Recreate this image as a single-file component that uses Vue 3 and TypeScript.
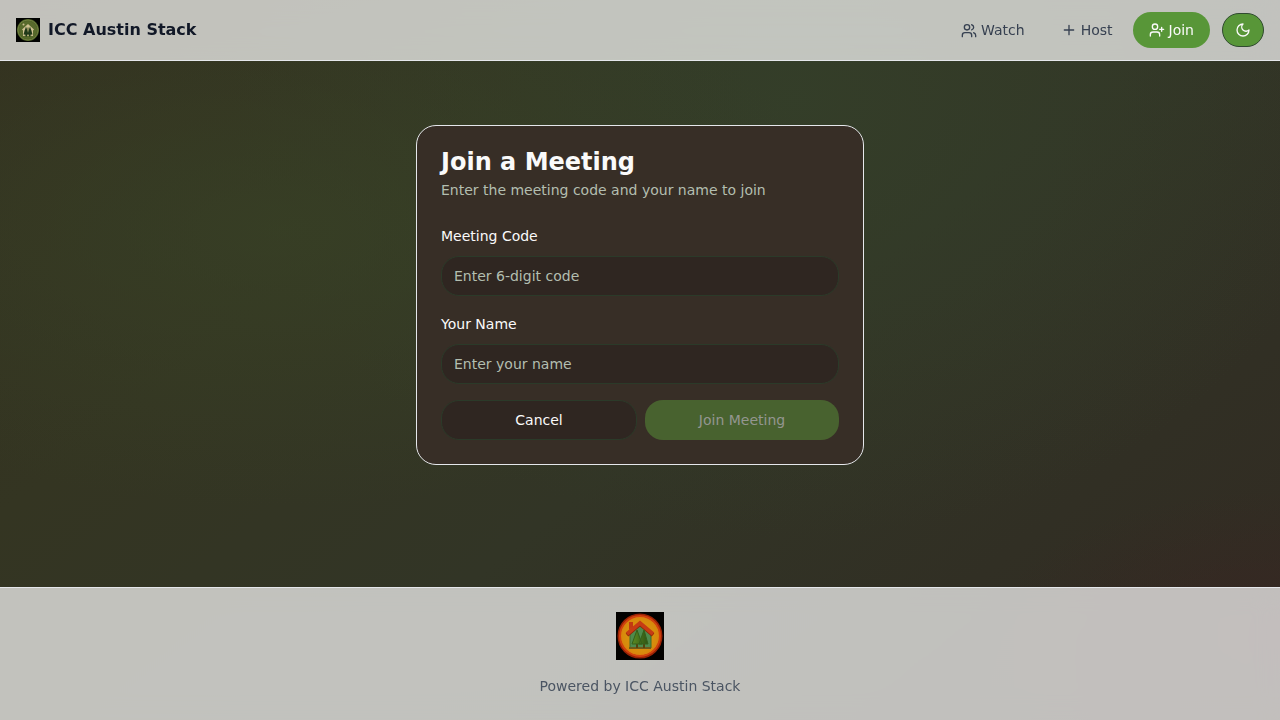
<script setup lang="ts">
import { computed, ref } from 'vue'

const meetingCode = ref('')
const userName = ref('')
const canJoin = computed(() => meetingCode.value.length === 6 && userName.value.trim() !== '')

function reset(): void {
  meetingCode.value = ''
  userName.value = ''
}
</script>

<template>
  <div class="page">
    <header class="topbar">
      <a class="brand" href="#">
        <svg class="brand-logo" viewBox="0 0 48 48" aria-hidden="true">
          <rect width="48" height="48" fill="#020302" />
          <circle cx="24" cy="24" r="22" fill="#4f6329" />
          <circle cx="24" cy="24" r="20" fill="none" stroke="#707f3e" stroke-width="2" />
          <circle cx="24" cy="24" r="18" fill="#586a2c" />
          <circle cx="15" cy="13" r="2" fill="#cdbf90" />
          <path d="M12 23 24 12l12 11-2 2v11H14V25z" fill="#cfc192" />
          <path d="M17 25l7-7 7 7v10H17z" fill="#8c8c58" />
          <path d="M20 17l5 16h-3v4h-3v-4h-4zM28 17l5 16h-4v4h-3v-4h-3z" fill="#1f3819" />
        </svg>
        <span>ICC Austin Stack</span>
      </a>
      <nav class="nav">
        <a class="nav-link" href="#watch">
          <svg class="icon" viewBox="0 0 24 24" aria-hidden="true">
            <path d="M16 22v-2a4 4 0 0 0-4-4H6a4 4 0 0 0-4 4v2" />
            <circle cx="9" cy="8" r="4" />
            <path d="M22 22v-2a4 4 0 0 0-3-3.870M16 4.130a4 4 0 0 1 0 7.750" />
          </svg>
          Watch
        </a>
        <a class="nav-link" href="#host">
          <svg class="icon" viewBox="0 0 24 24" aria-hidden="true">
            <path d="M5 12h14M12 5v14" />
          </svg>
          Host
        </a>
        <a class="nav-link active" href="#join">
          <svg class="icon" viewBox="0 0 24 24" aria-hidden="true">
            <path d="M16 21v-2a4 4 0 0 0-4-4H6a4 4 0 0 0-4 4v2" />
            <circle cx="9" cy="7" r="4" />
            <path d="M19 8v6M22 11h-6" />
          </svg>
          Join
        </a>
        <button class="theme" type="button" aria-label="Toggle theme">
          <svg class="icon" viewBox="0 0 24 24" aria-hidden="true">
            <path d="M12 3a6 6 0 0 0 9 9 9 9 0 1 1-9-9Z" />
          </svg>
        </button>
      </nav>
    </header>

    <main class="main">
      <form class="card" @submit.prevent>
        <h1>Join a Meeting</h1>
        <p class="subtitle">Enter the meeting code and your name to join</p>
        <div class="field">
          <label for="code">Meeting Code</label>
          <input id="code" v-model="meetingCode" type="text" maxlength="6" placeholder="Enter 6-digit code" />
        </div>
        <div class="field">
          <label for="name">Your Name</label>
          <input id="name" v-model="userName" type="text" placeholder="Enter your name" />
        </div>
        <div class="actions">
          <button class="cancel" type="button" @click="reset">Cancel</button>
          <button class="submit" type="submit" :disabled="!canJoin">Join Meeting</button>
        </div>
      </form>
    </main>

    <footer class="footer">
      <svg class="footer-logo" viewBox="0 0 48 48" aria-hidden="true">
        <defs>
          <radialGradient id="disc">
            <stop offset="0" stop-color="#dc9a12" />
            <stop offset="0.800" stop-color="#d78b0c" />
            <stop offset="1" stop-color="#dd7a10" />
          </radialGradient>
          <linearGradient id="tree" x1="0" x2="1">
            <stop offset="0" stop-color="#5c8a22" />
            <stop offset="1" stop-color="#2e5414" />
          </linearGradient>
        </defs>
        <rect width="48" height="48" fill="#020100" />
        <circle cx="24" cy="24" r="21" fill="url(#disc)" stroke="#9a2205" stroke-width="3" />
        <circle cx="24" cy="24" r="20" fill="none" stroke="#d2420d" stroke-width="2" />
        <path d="M14 21 24 12l11 9v15H14z" fill="#4f8a4c" stroke="#3f6a2c" stroke-width="1" />
        <path d="M13 36h22" stroke="#6f5a1a" stroke-width="2" />
        <path d="M13 18v-8h4v5z" fill="#c23a12" />
        <path d="M11 23 24 12l13 11" fill="none" stroke="#8f2407" stroke-width="4" />
        <path d="M11 22 24 11l13 11" fill="none" stroke="#c63c14" stroke-width="4" />
        <path d="M21 30v6M28 30v6" stroke="#54450f" stroke-width="2" />
        <path d="M21 18l5 14H16zM28 18l4 14h-9z" fill="url(#tree)" stroke="#34601a" stroke-width="1" />
      </svg>
      <p>Powered by ICC Austin Stack</p>
    </footer>
  </div>
</template>

<style>
body {
  margin: 0;
}
</style>

<style scoped>
.page {
  display: flex;
  flex-direction: column;
  min-height: 100vh;
  font-family: "DejaVu Sans", sans-serif;
  font-size: 14px;
  line-height: 20px;
  color: #fafafa;
  background:
    radial-gradient(ellipse at 100% 88%, rgba(58, 36, 34, 0.6), transparent 16%),
    radial-gradient(ellipse at 22% 32%, rgba(56, 66, 38, 0.7), transparent 40%),
    radial-gradient(ellipse at 62% 14%, rgba(52, 64, 42, 0.8), transparent 50%),
    linear-gradient(142deg, #33301f 0%, #343522 30%, #323526 55%, #312f24 78%, #322a22 100%);
}

.topbar {
  display: flex;
  align-items: center;
  justify-content: space-between;
  height: 60px;
  padding: 0 16px;
  border-bottom: 1px solid #e5e7eb;
  background: rgba(255, 255, 255, 0.7);
  backdrop-filter: blur(12px);
}

.brand {
  display: flex;
  align-items: center;
  gap: 8px;
  color: #111827;
  font-size: 16px;
  font-weight: 600;
  line-height: 24px;
  text-decoration: none;
}

.brand-logo {
  width: 24px;
  height: 24px;
}

.nav {
  display: flex;
  align-items: center;
  gap: 4px;
}

.nav-link {
  display: flex;
  align-items: center;
  gap: 4px;
  height: 36px;
  padding: 0 16px;
  border-radius: 18px;
  color: #374151;
  text-decoration: none;
}

.icon {
  width: 16px;
  height: 16px;
  fill: none;
  stroke: currentColor;
  stroke-width: 2;
  stroke-linecap: round;
  stroke-linejoin: round;
}

.active {
  color: #fafafa;
  background: #589638;
}

.theme {
  display: flex;
  align-items: center;
  justify-content: center;
  width: 42px;
  height: 34px;
  margin-left: 8px;
  padding: 0;
  border: 1px solid #304a30;
  border-radius: 17px;
  color: #fafafa;
  background: #589638;
}

.main {
  flex: 1;
  padding: 64px 16px;
}

.card {
  box-sizing: border-box;
  max-width: 448px;
  margin: 0 auto;
  padding: 24px;
  border: 1px solid #e5e7eb;
  border-radius: 20px;
  background: #372e26;
}

h1 {
  margin: 0 0 6px;
  font-size: 24px;
  font-weight: 600;
  line-height: 24px;
}

.subtitle {
  margin: 0 0 24px;
  color: #b3beb0;
}

.field {
  display: flex;
  flex-direction: column;
  gap: 8px;
  margin-bottom: 16px;
}

label {
  line-height: 24px;
}

input,
.cancel,
.submit {
  box-sizing: border-box;
  height: 40px;
  border: 1px solid #2b3a29;
  border-radius: 18px;
  color: #fafafa;
  background: #2f2621;
  font: inherit;
}

input {
  width: 100%;
  padding: 0 12px;
}

input::placeholder {
  color: #b3beb0;
  opacity: 1;
}

.actions {
  display: flex;
  gap: 8px;
}

.actions button {
  flex: 1;
}

.submit {
  border: 0;
  background: #589638;
}

.submit:disabled {
  color: #949690;
  background: #48622f;
}

.footer {
  display: flex;
  flex-direction: column;
  align-items: center;
  gap: 16px;
  padding: 24px 16px;
  border-top: 1px solid #e5e7eb;
  color: #4b5563;
  background: rgba(255, 255, 255, 0.7);
  backdrop-filter: blur(12px);
}

.footer-logo {
  width: 48px;
  height: 48px;
}

.footer p {
  margin: 0;
}
</style>
